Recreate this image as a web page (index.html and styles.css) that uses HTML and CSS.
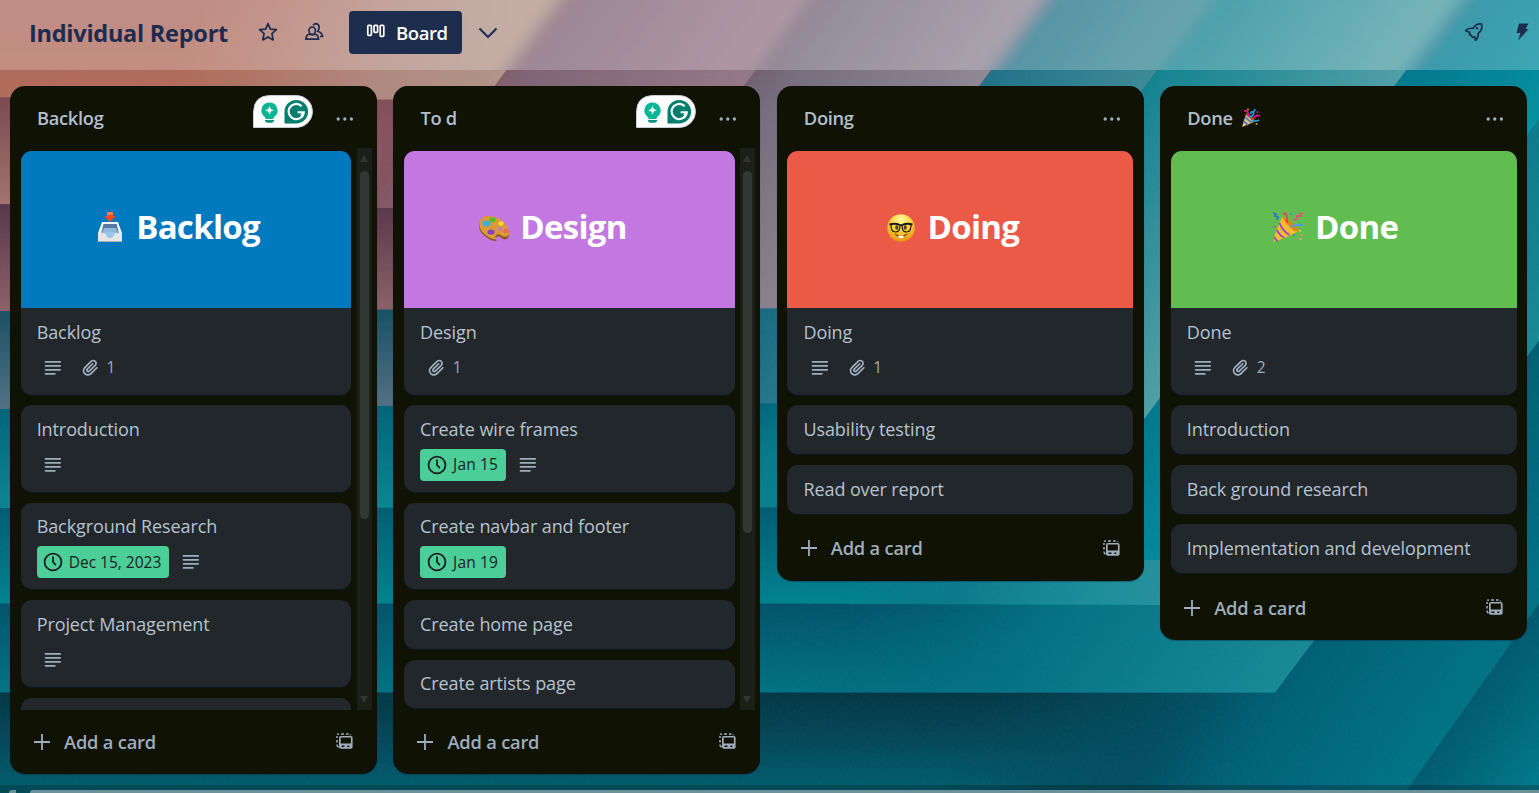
FILE: index.html
```html
<!DOCTYPE html>
<html lang="en">
<head>
<meta charset="utf-8">
<title>Individual Report</title>
<link rel="stylesheet" href="styles.css">
</head>
<body>
<svg class="defs" width="0" height="0" aria-hidden="true">
  <symbol id="i-desc" viewBox="0 0 24 24"><path d="M4 5.500h16.500M4 10h16.500M4 14.500h16.500M4 19h10.500" fill="none" stroke="currentColor" stroke-width="2" stroke-linecap="round"/></symbol>
  <symbol id="i-clip" viewBox="0 0 24 24"><path fill="currentColor" d="M11.6426 17.9647C10.1123 19.46 7.62736 19.4606 6.10092 17.9691C4.57505 16.478 4.57769 14.0467 6.10253 12.5566L13.2505 5.57184C14.1476 4.6953 15.5861 4.69251 16.4832 5.56921C17.3763 6.44184 17.3778 7.85135 16.4869 8.72199L9.78361 15.2722C9.53288 15.5172 9.12807 15.5163 8.86954 15.2636C8.61073 15.0107 8.60963 14.6158 8.86954 14.3618L15.0989 8.27463C15.4812 7.90109 15.4812 7.29546 15.0989 6.92192C14.7167 6.54838 14.0969 6.54838 13.7146 6.92192L7.48523 13.0091C6.45911 14.0118 6.46356 15.618 7.48523 16.6163C8.50674 17.6145 10.1511 17.6186 11.1679 16.6249L17.8712 10.0747C19.5274 8.45632 19.5244 5.83555 17.8676 4.2165C16.2047 2.59156 13.5266 2.59657 11.8662 4.21913L4.71822 11.2039C2.42951 13.4404 2.42555 17.083 4.71661 19.3218C7.00774 21.5606 10.7323 21.5597 13.0269 19.3174L19.7133 12.7837C20.0956 12.4101 20.0956 11.8045 19.7133 11.431C19.331 11.0574 18.7113 11.0574 18.329 11.431L11.6426 17.9647Z"/></symbol>
  <symbol id="i-clock" viewBox="0 0 24 24"><circle cx="12" cy="12" r="9.2" fill="none" stroke="currentColor" stroke-width="2"/><path d="M12 6.6V12l2.6 2.9" fill="none" stroke="currentColor" stroke-width="2" stroke-linecap="round"/></symbol>
  <symbol id="i-dots" viewBox="0 0 18 4"><circle cx="2.2" cy="2" r="1.65" fill="currentColor"/><circle cx="8.8" cy="2" r="1.65" fill="currentColor"/><circle cx="15.4" cy="2" r="1.65" fill="currentColor"/></symbol>
  <symbol id="i-plus" viewBox="0 0 16 16"><path d="M8 0v16M0 8h16" stroke="currentColor" stroke-width="1.8"/></symbol>
  <symbol id="i-tpl" viewBox="0 0 17 16"><path d="M1 5V3M1 7v2.6M1 11.6q0 2 1.6 2.4M1.2 1.6Q1.6.9 3 .9M5 .9h3M10 .9h2.6M14.4 1.4v.8" fill="none" stroke="currentColor" stroke-width="1.5"/><path fill="currentColor" fill-rule="evenodd" d="M4.8 3h10q1.8 0 1.8 1.8v9.2q0 1.8-1.8 1.8h-10Q3 15.800 3 14V4.800Q3 3 4.800 3ZM4.700 4.600v6h10.200v-6ZM5.500 12.600v1.300h3v-1.300ZM11.300 12.600v1.300h2v-1.300Z"/></symbol>
  <symbol id="i-gram" viewBox="0 0 60 33">
    <path d="M.5 32.500V17Q.8.8 17 .5H43.500A16 16 0 0 1 43.500 32.500Z" fill="#fff" stroke="#c9ced6"/>
    <path d="M16.500 7.500a8 8 0 0 0-4.700 14.500l1 2h7.400l1-2a8 8 0 0 0-4.700-14.500Z" fill="#0ab596"/>
    <path d="M12 24.900h9v.9q-.4 2-2.500 2h-4q-2 0-2.500-2Z" fill="#04937d"/>
    <path d="M16.500 11l1.300 3 3 1.300-3 1.300-1.300 3-1.300-3-3-1.300 3-1.300Z" fill="#fff"/>
    <path d="M31.500 28.500V16.500A11.800 11.800 0 1 1 43.300 28.500Z" fill="#027e6f"/>
    <path d="M48.700 11.200A7.600 7.600 0 1 0 50.800 17.300H44.600M48 20.500l2.900-3.200" fill="none" stroke="#fff" stroke-width="2.100"/>
  </symbol>
  <symbol id="e-tray" viewBox="0 0 26 32">
    <path d="M5 11h16l4 11v8.500H1V22Z" fill="#f5f6f7"/><path d="M6.500 13h13.200L22 23H4Z" fill="#57799f"/><path d="M7 17h12l2.600 6H4.200Z" fill="#91b7dd"/>
    <path d="M1 22h7q1 5 5 5t5-5h7v8.500H1Z" fill="#e4e5e7"/><path d="M8 21q1 6 5 6t5-6Z" fill="#9bc7ee"/><path d="M1.500 30.500h23" stroke="#a8b0b8"/>
    <path d="M10 1h6v4h3l-6 6-6-6h3Z" fill="#ee4926"/><path d="M10 1h6v3h-6Z" fill="#ff7a43"/>
  </symbol>
  <symbol id="e-palette" viewBox="0 0 32 27">
    <path d="M2 7Q5 0 15 2q8 2 12 7 6 8 3 14-3 3-7-.5-3-2.500-5 0-1 3 1 3-3 1.500-8-1.500Q-2 16 2 7Z" fill="#8b561c"/>
    <path d="M2 6Q5-.5 15 1.500q8 2 12 7 6 7 3 12.500-3 2-7-.8-4-2.200-5.500.8-.5 2 1 3-3 1-8-2Q-1 15 2 6Z" fill="#d99b35"/>
    <ellipse cx="22" cy="14" rx="2.600" ry="1.800" fill="#c177df"/>
    <ellipse cx="8.500" cy="8.500" rx="3.800" ry="3" fill="#36b2e6"/><ellipse cx="14.500" cy="4.700" rx="3" ry="2.500" fill="#4cc02b"/><ellipse cx="23" cy="8.500" rx="2.700" ry="2.200" fill="#f5d52f"/><ellipse cx="28" cy="16" rx="2.700" ry="2.300" fill="#f26b52"/><ellipse cx="13" cy="17" rx="3.500" ry="2.600" fill="#8740c0"/>
  </symbol>
  <symbol id="e-nerd" viewBox="0 0 28 28">
    <defs><radialGradient id="face" cx=".5" cy=".2" r=".85"><stop offset="0" stop-color="#fff9a0"/><stop offset=".5" stop-color="#fbce2e"/><stop offset="1" stop-color="#e38a12"/></radialGradient></defs>
    <circle cx="14" cy="14" r="13.700" fill="url(#face)"/>
    <ellipse cx="9.800" cy="13.500" rx="1.600" ry="2.300" fill="#6b3c0b"/><ellipse cx="18.200" cy="13.500" rx="1.600" ry="2.300" fill="#6b3c0b"/>
    <path d="M2.500 10.500q5.500-1.600 10 .4 1.500.6 3 0 4.500-2 10-.4" fill="none" stroke="#141a20" stroke-width="2"/>
    <path d="M4 11q0 7 4.500 7t4.500-6.500M15 11.500q0 6.500 4.500 6.500t4.500-7" fill="none" stroke="#141a20" stroke-width="1.200"/>
    <path d="M8 20q6 5 12 0" fill="none" stroke="#7a3d08" stroke-width="1.200"/><path d="M11.500 21.800h5v2.200h-5Z" fill="#fff"/>
  </symbol>
  <symbol id="e-party" viewBox="0 0 32 32">
    <path d="M10 6Q18 9 27 19 24 23 2 31 1 28 4 21Z" fill="#f6bd2e"/><path d="M10 6q10 3 17 13-2 2-5 1Q13 12 10 6Z" fill="#d78714"/>
    <path d="M7.500 12q3 8 10 12M5 19q2 5 7 7.500M2.500 26q1 3 3 4" fill="none" stroke="#9a49c6" stroke-width="2"/>
    <path d="M11 2q5 0 4 10" fill="none" stroke="#ef3e5c" stroke-width="1.800"/><path d="M18 16q6-3 13-2" fill="none" stroke="#5796ee" stroke-width="1.800"/>
    <path d="M1 2l3 1-1 2 3 1-1 3" fill="none" stroke="#2f72d6" stroke-width="1.700"/><path d="M31 2l-3 1 1 2-4 0 0 3-4 1" fill="none" stroke="#e84f78" stroke-width="1.800"/>
    <circle cx="3" cy="16" r="1" fill="#e2456d"/><circle cx="28" cy="20" r="1" fill="#f1d34b"/><circle cx="30" cy="24" r="1" fill="#f4a141"/><circle cx="28.500" cy="28" r="1.200" fill="#f190ad"/><circle cx="22" cy="24" r=".9" fill="#3b7be0"/><circle cx="19" cy="3" r="1" fill="#3b82e0"/>
  </symbol>
  <symbol id="e-party-sm" viewBox="0 0 20 20">
    <path d="M5 6l8 8-12 5Z" fill="#f7c552"/><path d="M4 9l7 6M2.500 13l4.500 4" stroke="#3a78e8" stroke-width="1.700"/><path d="M5 6q5 2 8 8" fill="none" stroke="#a0591c" stroke-width="2.200"/>
    <path d="M3 3q5-1 4.500 6" fill="none" stroke="#e8128a" stroke-width="1.700"/><path d="M9 9q5-2 3-5-3-1-2 2M14 1l-2 5" fill="none" stroke="#16a4ec" stroke-width="1.500"/>
    <path d="M12 11q3-5 7-3" fill="none" stroke="#e8128a" stroke-width="1.700"/><path d="M12 12q3 2 6 0" fill="none" stroke="#16a4ec" stroke-width="1.700"/>
    <circle cx="7" cy="1.500" r="1" fill="#dd9c23"/><circle cx="16.500" cy="4" r="1" fill="#e8128a"/><circle cx="15.500" cy="16" r="1" fill="#dd9c23"/>
  </symbol>
</svg>

<svg class="wallpaper" viewBox="0 0 1539 793" preserveAspectRatio="none" aria-hidden="true">
  <defs>
    <linearGradient id="v0" x1="0" x2="0" y1="0" y2="1"><stop offset="0" stop-color="#ab655e"/><stop offset="1" stop-color="#b16c58"/></linearGradient>
    <linearGradient id="v1" gradientUnits="userSpaceOnUse" x1="0" x2="0" y1="98" y2="206"><stop offset="0" stop-color="#7b4850"/><stop offset="1" stop-color="#a3746e"/></linearGradient>
    <linearGradient id="v2" gradientUnits="userSpaceOnUse" x1="0" x2="0" y1="206" y2="309"><stop offset="0" stop-color="#58374a"/><stop offset="1" stop-color="#8a6068"/></linearGradient>
    <linearGradient id="v3" gradientUnits="userSpaceOnUse" x1="0" x2="0" y1="309" y2="405"><stop offset="0" stop-color="#174f62"/><stop offset="1" stop-color="#506f82"/></linearGradient>
    <linearGradient id="v4" gradientUnits="userSpaceOnUse" x1="0" x2="0" y1="405" y2="508"><stop offset="0" stop-color="#00627a"/><stop offset="1" stop-color="#0c8490"/></linearGradient>
    <linearGradient id="v5" gradientUnits="userSpaceOnUse" x1="0" x2="0" y1="508" y2="604"><stop offset="0" stop-color="#015c72"/><stop offset="1" stop-color="#00828f"/></linearGradient>
    <linearGradient id="v6" gradientUnits="userSpaceOnUse" x1="0" x2="0" y1="604" y2="693"><stop offset="0" stop-color="#01536a"/><stop offset="1" stop-color="#007282"/></linearGradient>
    <linearGradient id="v7" gradientUnits="userSpaceOnUse" x1="0" x2="0" y1="693" y2="793"><stop offset="0" stop-color="#033745"/><stop offset=".5" stop-color="#03485a"/><stop offset="1" stop-color="#00606f"/></linearGradient>
    <linearGradient id="d0" gradientUnits="userSpaceOnUse" x1="190" y1="0" x2="500" y2="70"><stop offset="0" stop-color="#b28378" stop-opacity="0"/><stop offset=".6" stop-color="#b08c84" stop-opacity=".85"/><stop offset="1" stop-color="#b09488"/></linearGradient>
    <linearGradient id="d1" gradientUnits="userSpaceOnUse" x1="405" y1="-5" x2="664" y2="190"><stop offset="0" stop-color="#845161" stop-opacity="0"/><stop offset=".28" stop-color="#85515f"/><stop offset=".45" stop-color="#7f6475"/><stop offset="1" stop-color="#957887"/></linearGradient>
    <linearGradient id="d2" gradientUnits="userSpaceOnUse" x1="654" y1="-5" x2="906" y2="184"><stop offset="0" stop-color="#6b5666" stop-opacity="0"/><stop offset=".28" stop-color="#6b5363"/><stop offset=".5" stop-color="#756c7d"/><stop offset="1" stop-color="#908795"/></linearGradient>
    <linearGradient id="d3" gradientUnits="userSpaceOnUse" x1="891" y1="-5" x2="1097" y2="150"><stop offset="0" stop-color="#226e87" stop-opacity="0"/><stop offset=".35" stop-color="#186b83"/><stop offset="1" stop-color="#3d8997"/></linearGradient>
    <linearGradient id="d4" gradientUnits="userSpaceOnUse" x1="1057" y1="-5" x2="1316" y2="189"><stop offset="0" stop-color="#087f8d" stop-opacity="0"/><stop offset=".28" stop-color="#087e8c"/><stop offset="1" stop-color="#509ea6"/></linearGradient>
    <linearGradient id="d5" gradientUnits="userSpaceOnUse" x1="1306" y1="-5" x2="1515" y2="152"><stop offset="0" stop-color="#007389" stop-opacity="0"/><stop offset=".3" stop-color="#007087"/><stop offset="1" stop-color="#0490a0"/></linearGradient>
    <linearGradient id="h5" x1="0" x2="1" y1="0" y2="0"><stop offset="0" stop-color="#2b919b" stop-opacity="0"/><stop offset="1" stop-color="#2f939c" stop-opacity=".85"/></linearGradient>
    <linearGradient id="d6" gradientUnits="userSpaceOnUse" x1="1376" y1="-80" x2="1682" y2="149"><stop offset="0" stop-color="#00667d" stop-opacity="0"/><stop offset=".4" stop-color="#027084"/><stop offset="1" stop-color="#168995"/></linearGradient>
    <linearGradient id="d7" gradientUnits="userSpaceOnUse" x1="1561" y1="-65" x2="1868" y2="165"><stop offset="0" stop-color="#024b5e" stop-opacity="0"/><stop offset=".42" stop-color="#024d60"/><stop offset=".62" stop-color="#006177"/><stop offset="1" stop-color="#007285"/></linearGradient>
    <linearGradient id="d8" gradientUnits="userSpaceOnUse" x1="1405" y1="793" x2="1500" y2="864"><stop offset="0" stop-color="#005a70"/><stop offset="1" stop-color="#007e8f"/></linearGradient>
    <filter id="weave" x="0" y="0" width="100%" height="100%"><feTurbulence type="fractalNoise" baseFrequency=".5 .3" numOctaves="2" seed="4"/><feColorMatrix values="0 0 0 0 .5  0 0 0 0 .5  0 0 0 0 .5  .5 0 0 0 -.12"/></filter>
    <filter id="frost" filterUnits="userSpaceOnUse" x="-40" y="-40" width="1620" height="240"><feGaussianBlur stdDeviation="8"/></filter>
    <clipPath id="top"><path d="M0 0H1539V70H0Z"/></clipPath>
    <g id="scene">
      <path d="M0 -60H1539V793H0Z" fill="url(#d8)"/>
      <path d="M0 -60H1580V546L1405 793H0Z" fill="url(#v7)"/><path d="M0 -60H1580V546L1405 793H0Z" fill="url(#d7)"/>
      <path d="M0 -60H1580V286L1275 692.500H0Z" fill="url(#v6)"/><path d="M0 -60H1580V286L1275 692.500H0Z" fill="url(#d6)"/>
      <path d="M0 -60H1580V65L1176 605 760 603.500H0Z" fill="url(#v5)"/><path d="M0 -60H1580V65L1176 605 760 603.500H0Z" fill="url(#d5)"/>
      <path d="M850 560H1210L1176 605 850 603.500Z" fill="url(#h5)"/>
      <path d="M0 -60H1504L1078 507 0 508Z" fill="url(#v4)"/><path d="M0 -60H1504L1078 507 0 508Z" fill="url(#d4)"/>
      <path d="M0 -60H1255L908 402 0 409Z" fill="url(#v3)"/><path d="M0 -60H1255L908 402 0 409Z" fill="url(#d3)"/>
      <path d="M0 -60H1089L812 308 0 311Z" fill="url(#v2)"/><path d="M0 -60H1089L812 308 0 311Z" fill="url(#d2)"/>
      <path d="M0 -60H852L652 210 0 204Z" fill="url(#v1)"/><path d="M0 -60H852L652 210 0 204Z" fill="url(#d1)"/>
      <path d="M-40 -60H603L484 100 -40 97Z" fill="url(#v0)"/><path d="M0 -60H603L484 100 0 97Z" fill="url(#d0)"/>
    </g>
  </defs>
  <use href="#scene"/>
  <path d="M0 0H1539V793H0Z" filter="url(#weave)" opacity=".12"/>
  <g clip-path="url(#top)"><use href="#scene" filter="url(#frost)"/></g>
</svg>

<div class="app">
  <header class="bar">
    <h1 class="bar-title">Individual Report</h1>
    <svg class="ic-star" viewBox="0 0 20 20"><path d="M10 1.600l2.400 5.500 6 .6-4.500 4 1.300 6.200L10 14.900l-5.200 3 1.300-6.200-4.500-4 6-.6Z" fill="none" stroke="currentColor" stroke-width="1.700" stroke-linejoin="round"/></svg>
    <svg class="ic-people" viewBox="0 0 20 20"><g fill="none" stroke="currentColor" stroke-width="1.700" stroke-linejoin="round"><path d="M1.800 17.200h12.800q-.4-4.400-3.600-5.200l-2.800 1-2.800-1Q2 13 1.800 17.200Z"/><ellipse cx="8.200" cy="8.700" rx="3.200" ry="3.700"/><path d="M9.200 3.500q1-2 3-1.900 3.500.8 2.800 5-.4 1.700-1.400 2.600 4.800 1.300 5 5.300H16"/></g></svg>
    <button class="board-btn">
      <svg class="ic-board" viewBox="0 0 20 14"><g fill="none" stroke="currentColor" stroke-width="1.700"><rect x="1.800" y="1.300" width="3.600" height="10" rx=".8"/><rect x="8" y="1.300" width="3.600" height="7" rx=".8"/><rect x="14.200" y="1.300" width="3.600" height="11" rx=".8"/></g></svg>
      <span>Board</span>
    </button>
    <svg class="ic-chev" viewBox="0 0 20 12"><path d="M1.500 1.500L10 10l8.500-8.500" fill="none" stroke="currentColor" stroke-width="2"/></svg>
    <svg class="ic-rocket" viewBox="0 0 20 20"><path d="M17.500 2q-5-1-8.500 4.300Q4.200 5.800 1.600 8.800l4.200 1.400-.5 1.800 3.700 3.300 1.700-.5.900 3.600q3-3 2.500-7Q19 8 17.500 2Z" fill="none" stroke="currentColor" stroke-width="1.700" stroke-linejoin="round"/><circle cx="13" cy="6.300" r="1.200" fill="currentColor"/></svg>
    <svg class="ic-bolt" viewBox="0 0 13 18"><path d="M3 .5h9.500L9.500 6h3.200L2 17.500 4.500 10H.5Z" fill="currentColor"/></svg>
  </header>

  <main class="board">
    <section class="list list-full">
      <div class="list-head"><h2>Backlog</h2><svg class="gram"><use href="#i-gram"/></svg><svg class="dots"><use href="#i-dots"/></svg></div>
      <div class="scroller">
        <div class="cards">
          <article class="card"><div class="cover c-blue"><svg class="em em-tray"><use href="#e-tray"/></svg><span>Backlog</span></div>
            <div class="body"><p>Backlog</p><div class="badges"><span class="badge"><svg class="desc"><use href="#i-desc"/></svg></span><span class="badge"><svg class="clip"><use href="#i-clip"/></svg>1</span></div></div></article>
          <article class="card"><div class="body"><p>Introduction</p><div class="badges"><span class="badge"><svg class="desc"><use href="#i-desc"/></svg></span></div></div></article>
          <article class="card"><div class="body"><p>Background Research</p><div class="badges"><span class="due"><svg class="clock"><use href="#i-clock"/></svg>Dec 15, 2023</span><span class="badge"><svg class="desc"><use href="#i-desc"/></svg></span></div></div></article>
          <article class="card"><div class="body"><p>Project Management</p><div class="badges"><span class="badge"><svg class="desc"><use href="#i-desc"/></svg></span></div></div></article>
          <article class="card card-cut"></article>
        </div>
        <div class="track"><i class="up"></i><i class="thumb thumb-a"></i><i class="down"></i></div>
      </div>
      <div class="foot"><svg class="plus"><use href="#i-plus"/></svg><span>Add a card</span><svg class="tpl"><use href="#i-tpl"/></svg></div>
    </section>

    <section class="list list-full">
      <div class="list-head"><h2>To d</h2><svg class="gram"><use href="#i-gram"/></svg><svg class="dots"><use href="#i-dots"/></svg></div>
      <div class="scroller">
        <div class="cards">
          <article class="card"><div class="cover c-purple"><svg class="em em-palette"><use href="#e-palette"/></svg><span>Design</span></div>
            <div class="body"><p>Design</p><div class="badges"><span class="badge"><svg class="clip"><use href="#i-clip"/></svg>1</span></div></div></article>
          <article class="card"><div class="body"><p>Create wire frames</p><div class="badges"><span class="due due-short"><svg class="clock"><use href="#i-clock"/></svg>Jan 15</span><span class="badge"><svg class="desc"><use href="#i-desc"/></svg></span></div></div></article>
          <article class="card"><div class="body"><p>Create navbar and footer</p><div class="badges"><span class="due due-short"><svg class="clock"><use href="#i-clock"/></svg>Jan 19</span></div></div></article>
          <article class="card"><div class="body"><p>Create home page</p></div></article>
          <article class="card"><div class="body"><p>Create artists page</p></div></article>
        </div>
        <div class="track"><i class="up"></i><i class="thumb thumb-b"></i><i class="down"></i></div>
      </div>
      <div class="foot"><svg class="plus"><use href="#i-plus"/></svg><span>Add a card</span><svg class="tpl"><use href="#i-tpl"/></svg></div>
    </section>

    <section class="list">
      <div class="list-head"><h2>Doing</h2><svg class="dots"><use href="#i-dots"/></svg></div>
      <div class="scroller">
        <div class="cards">
          <article class="card"><div class="cover c-red"><svg class="em em-nerd"><use href="#e-nerd"/></svg><span>Doing</span></div>
            <div class="body"><p>Doing</p><div class="badges"><span class="badge"><svg class="desc"><use href="#i-desc"/></svg></span><span class="badge"><svg class="clip"><use href="#i-clip"/></svg>1</span></div></div></article>
          <article class="card"><div class="body"><p>Usability testing</p></div></article>
          <article class="card"><div class="body"><p>Read over report</p></div></article>
        </div>
      </div>
      <div class="foot"><svg class="plus"><use href="#i-plus"/></svg><span>Add a card</span><svg class="tpl"><use href="#i-tpl"/></svg></div>
    </section>

    <section class="list">
      <div class="list-head"><h2>Done</h2><svg class="em-sm"><use href="#e-party-sm"/></svg><svg class="dots"><use href="#i-dots"/></svg></div>
      <div class="scroller">
        <div class="cards">
          <article class="card"><div class="cover c-green"><svg class="em em-party"><use href="#e-party"/></svg><span>Done</span></div>
            <div class="body"><p>Done</p><div class="badges"><span class="badge"><svg class="desc"><use href="#i-desc"/></svg></span><span class="badge"><svg class="clip"><use href="#i-clip"/></svg>2</span></div></div></article>
          <article class="card"><div class="body"><p>Introduction</p></div></article>
          <article class="card"><div class="body"><p>Back ground research</p></div></article>
          <article class="card"><div class="body"><p>Implementation and development</p></div></article>
        </div>
      </div>
      <div class="foot"><svg class="plus"><use href="#i-plus"/></svg><span>Add a card</span><svg class="tpl"><use href="#i-tpl"/></svg></div>
    </section>
  </main>
  <div class="hscroll"><i class="hleft"></i><i class="hthumb"></i></div>
</div>
</body>
</html>
```
FILE: styles.css
```css
* { box-sizing: border-box; }
body { margin: 0; overflow: hidden; font-family: "Open Sans", "Noto Sans", sans-serif; }
h1, h2, p { margin: 0; }
svg { display: block; flex: none; }
.defs { position: absolute; }
.wallpaper { position: absolute; left: 0; top: 0; width: 1539px; height: 793px; }
.app { position: relative; width: 1539px; height: 793px; display: flex; flex-direction: column; overflow: hidden; }

.bar { height: 70px; flex: none; display: flex; align-items: center; padding: 0 10px 5px 29px; color: #1b2c50; background: rgba(255,255,255,.24); }
.bar-title { width: 199px; font-size: 23.500px; font-weight: 700; line-height: 32px; white-space: nowrap; letter-spacing: -.25px; padding-top: 0; }
.ic-star { width: 20px; height: 20px; margin-left: 30px; margin-top: -2px; }
.ic-people { width: 20px; height: 20px; margin-left: 26px; margin-top: -2px; }
.board-btn { margin-left: 25px; width: 113px; height: 43px; border: 0; border-radius: 4px; padding: 0 0 0 17px; display: flex; align-items: center; gap: 10px; background: #1d2d4e; color: #fff; font: 600 18.500px/26px "Open Sans", sans-serif; letter-spacing: -.4px; }
.ic-board { width: 20px; height: 14px; margin-top: -3px; margin-right: 0; }
.ic-chev { width: 20px; height: 12px; margin-left: 16px; }
.ic-rocket { width: 20px; height: 20px; margin-left: auto; margin-top: -2px; }
.ic-bolt { width: 13px; height: 18px; margin-left: 32px; margin-top: -2px; }

.board { flex: 1; min-height: 0; display: flex; align-items: flex-start; gap: 16.400px; padding: 16px 10px 0; }
.list { width: 367px; flex: none; background: #101204; border-radius: 15px; display: flex; flex-direction: column; box-shadow: 0 1px 1px rgba(9,30,66,.4); }
.list-full { height: 688px; }
.list-head { height: 62px; flex: none; display: flex; align-items: center; padding: 1px 23px 0 27px; color: #b3bfcc; }
.list-head h2 { font-size: 18.300px; font-weight: 600; line-height: 27px; letter-spacing: -.3px; white-space: nowrap; }
.gram { width: 60px; height: 33px; margin: -13px 23px 0 auto; }
.dots { width: 18px; height: 4px; margin-left: auto; color: #9fadbc; margin-top: 2px; }
.gram + .dots { margin-left: 0; }
.em-sm { width: 20px; height: 20px; margin-left: 8px; }

.scroller { flex: 1; min-height: 0; display: flex; padding: 0 5px 0 10.700px; overflow: hidden; }
.cards { flex: 1; padding: 3px 5.600px 3px 0; display: flex; flex-direction: column; gap: 10.670px; overflow: hidden; }
.card { flex: none; border-radius: 10.670px; background: #22272b; color: #b6c2cf; overflow: hidden; box-shadow: 0 1px 1px rgba(9,30,66,.5); }
.card-cut { height: 48px; }
.cover { height: 157px; display: flex; align-items: center; justify-content: center; padding-bottom: 6px; color: #fff; font-size: 33px; font-weight: 700; letter-spacing: -.7px; }
.c-blue { background: #0079bf; padding-right: 15px; }
.c-purple { background: #c377e0; padding-right: 34px; }
.c-red { background: #eb5a46; padding-right: 14px; }
.c-green { background: #61bd4f; padding-right: 17px; }
.em { margin-top: 2px; }
.em-tray { width: 26px; height: 32px; margin-right: 13px; margin-top: 0; }
.em-palette { width: 32px; height: 27px; margin-right: 10px; margin-top: 4px; }
.em-nerd { width: 28px; height: 28px; margin-right: 12px; }
.em-party { width: 32px; height: 32px; margin-right: 11px; margin-top: 0; }
.body { padding: 10.670px 16px 11.500px; }
.body p { font-size: 18px; line-height: 26.670px; letter-spacing: -.1px; white-space: nowrap; }
.badges { height: 37.900px; padding-top: 6px; display: flex; align-items: center; gap: 5.300px; font-size: 15.500px; line-height: 26.670px; }
.badge { display: flex; align-items: center; gap: 5px; padding: 0 5.330px; color: #9fadbc; height: 32px; }
.desc { width: 21.300px; height: 21.300px; }
.clip { width: 21.300px; height: 21.300px; margin-left: 1px; }
.due { display: flex; align-items: center; height: 32px; border-radius: 4px; padding: 0 8px 0 5px; gap: 5px; background: #4bce97; color: #1d2125; white-space: nowrap; }
.due-short { padding-left: 6px; letter-spacing: .15px; }
.clock { width: 22px; height: 22px; }

.track { position: relative; width: 15px; flex: none; background: #1c1f17; }
.up, .down { position: absolute; left: 3px; border: 4.500px solid transparent; }
.up { top: 3px; border-bottom: 7px solid #30362f; }
.down { bottom: 3px; border-top: 7px solid #30362f; }
.thumb { position: absolute; left: 3px; top: 23px; width: 9px; border-radius: 4.500px; background: #323934; }
.thumb-a { height: 348px; }
.thumb-b { height: 362px; }

.foot { height: 64px; flex: none; display: flex; align-items: center; padding: 0 24px 2px; color: #9fadbc; font-size: 18.300px; font-weight: 600; letter-spacing: -.2px; }
.plus { width: 16px; height: 16px; margin-right: 14px; margin-top: 1px; }
.tpl { width: 17px; height: 16px; margin-left: auto; }

.hscroll { height: 8px; flex: none; display: flex; align-items: flex-end; background: rgba(0,20,30,.28); }
.hleft { width: 7px; height: 3px; margin-left: 9px; background: #6b9199; border-top-left-radius: 6px; }
.hthumb { flex: 1; height: 3px; margin-left: 14px; background: #6b9199; border-top-left-radius: 6px; }
```
